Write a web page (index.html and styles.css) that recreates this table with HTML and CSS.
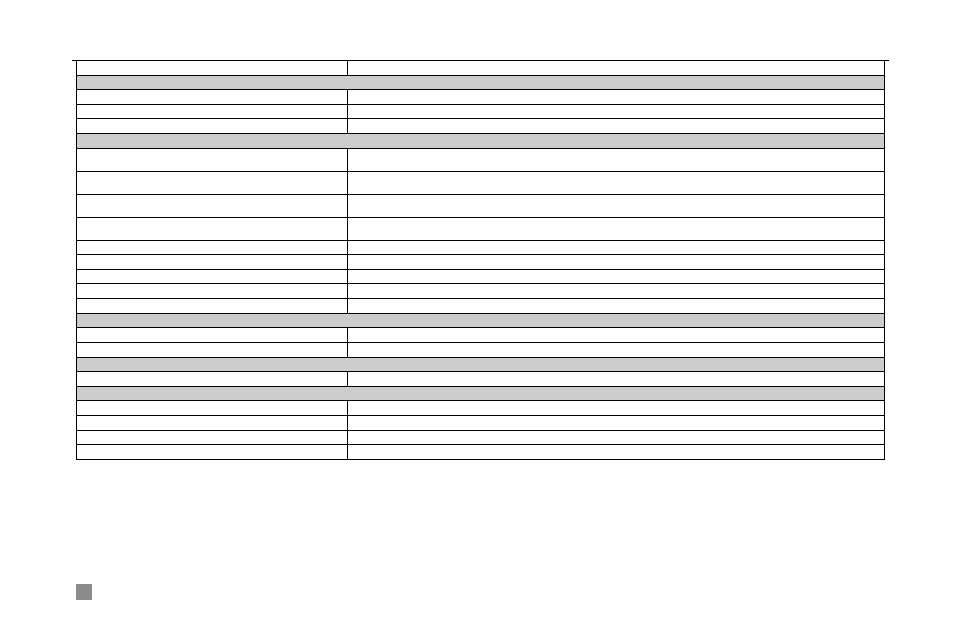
FILE: index.html
```html
<!DOCTYPE html>
<html>
<head>
<meta charset="utf-8">
<title>Table</title>
<link rel="stylesheet" href="styles.css">
</head>
<body>
<div class="page">
  <div class="topline"></div>
  <div class="table">
    <div class="row"><div class="c1"></div><div class="c2"></div></div>
    <div class="row section"></div>
    <div class="row"><div class="c1"></div><div class="c2"></div></div>
    <div class="row"><div class="c1"></div><div class="c2"></div></div>
    <div class="row"><div class="c1"></div><div class="c2"></div></div>
    <div class="row section"></div>
    <div class="row tall"><div class="c1"></div><div class="c2"></div></div>
    <div class="row tall"><div class="c1"></div><div class="c2"></div></div>
    <div class="row tall"><div class="c1"></div><div class="c2"></div></div>
    <div class="row tall"><div class="c1"></div><div class="c2"></div></div>
    <div class="row"><div class="c1"></div><div class="c2"></div></div>
    <div class="row"><div class="c1"></div><div class="c2"></div></div>
    <div class="row"><div class="c1"></div><div class="c2"></div></div>
    <div class="row"><div class="c1"></div><div class="c2"></div></div>
    <div class="row"><div class="c1"></div><div class="c2"></div></div>
    <div class="row section"></div>
    <div class="row"><div class="c1"></div><div class="c2"></div></div>
    <div class="row"><div class="c1"></div><div class="c2"></div></div>
    <div class="row section"></div>
    <div class="row"><div class="c1"></div><div class="c2"></div></div>
    <div class="row section"></div>
    <div class="row"><div class="c1"></div><div class="c2"></div></div>
    <div class="row"><div class="c1"></div><div class="c2"></div></div>
    <div class="row"><div class="c1"></div><div class="c2"></div></div>
    <div class="row"><div class="c1"></div><div class="c2"></div></div>
  </div>
  <div class="marker"></div>
</div>
</body>
</html>
```
FILE: styles.css
```css
html, body {
  margin: 0;
  padding: 0;
  background: #ffffff;
  font-family: "Liberation Sans", Arial, sans-serif;
}
.page {
  padding-top: 60px;
  margin-left: 76px;
  width: 809px;
}
.topline {
  height: 1px;
  margin: 0 -4px;
  background: #000000;
}
.table {
  border-left: 1px solid #000000;
  border-right: 1px solid #000000;
}
.row {
  display: grid;
  grid-template-columns: 270px 1fr;
  height: 14.62px;
  box-sizing: border-box;
  border-bottom: 1px solid #000000;
}
.row.tall {
  height: 23px;
}
.row.section {
  display: block;
  background: #cccccc;
}
.c2 {
  border-left: 1px solid #000000;
}
.marker {
  width: 16px;
  height: 16px;
  margin-top: 124px;
  background: #8c8c8c;
}
```
